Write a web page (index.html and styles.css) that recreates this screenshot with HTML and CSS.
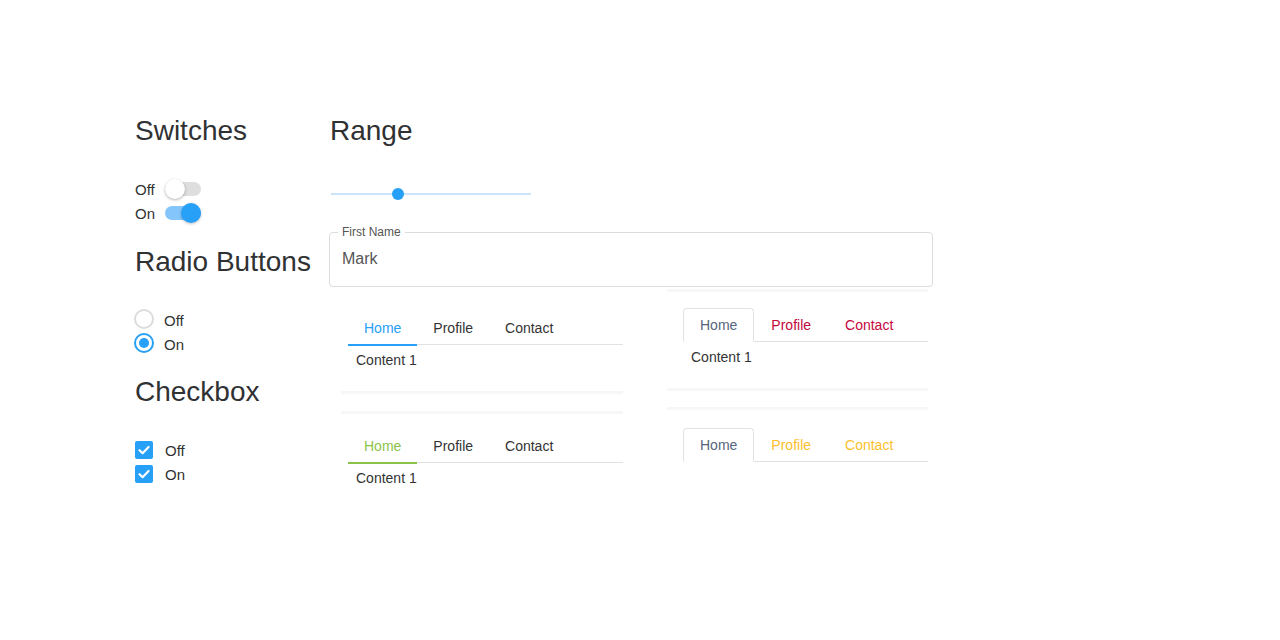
FILE: index.html
```html
<!DOCTYPE html>
<html lang="en">
<head>
<meta charset="utf-8">
<title>Form controls</title>
<link rel="stylesheet" href="styles.css">
</head>
<body>
<div class="page">
  <div class="col-left">
    <section class="section">
      <h2 class="title">Switches</h2>
      <div class="row">
        <span class="label">Off</span>
        <span class="switch"><span class="switch-knob"></span></span>
      </div>
      <div class="row">
        <span class="label">On</span>
        <span class="switch switch--on"><span class="switch-knob"></span></span>
      </div>
    </section>
    <section class="section">
      <h2 class="title">Radio Buttons</h2>
      <div class="row">
        <span class="radio"></span>
        <span class="label">Off</span>
      </div>
      <div class="row">
        <span class="radio radio--on"><span class="radio-dot"></span></span>
        <span class="label">On</span>
      </div>
    </section>
    <section class="section">
      <h2 class="title">Checkbox</h2>
      <div class="row">
        <span class="check"><svg viewBox="0 0 18 18" width="18" height="18"><polyline points="4.5,9.2 7.6,12.2 13.6,6" fill="none" stroke="#fff" stroke-width="2.2" stroke-linecap="round" stroke-linejoin="round"/></svg></span>
        <span class="label">Off</span>
      </div>
      <div class="row">
        <span class="check"><svg viewBox="0 0 18 18" width="18" height="18"><polyline points="4.5,9.2 7.6,12.2 13.6,6" fill="none" stroke="#fff" stroke-width="2.2" stroke-linecap="round" stroke-linejoin="round"/></svg></span>
        <span class="label">On</span>
      </div>
    </section>
  </div>

  <div class="col-right">
    <h2 class="title title--inset">Range</h2>
    <div class="slider">
      <div class="slider-track"></div>
      <div class="slider-thumb"></div>
    </div>

    <fieldset class="field">
      <legend class="field-legend">First Name</legend>
      <div class="field-value">Mark</div>
    </fieldset>

    <div class="tab-grid">
      <div class="tab-col tab-col--wide">
        <div class="card card--pad-s bar-bottom">
          <div class="nav">
            <span class="tab tab--line tab--blue is-active">Home</span>
            <span class="tab tab--line">Profile</span>
            <span class="tab tab--line">Contact</span>
          </div>
          <div class="pane">Content 1</div>
        </div>
        <div class="card card--pad-s bar-top">
          <div class="nav">
            <span class="tab tab--line tab--green is-active">Home</span>
            <span class="tab tab--line">Profile</span>
            <span class="tab tab--line">Contact</span>
          </div>
          <div class="pane">Content 1</div>
        </div>
      </div>
      <div class="tab-col tab-col--narrow">
        <div class="card card--pad-l bar-top bar-bottom">
          <div class="nav">
            <span class="tab tab--box is-active">Home</span>
            <span class="tab tab--box tab--crimson">Profile</span>
            <span class="tab tab--box tab--crimson">Contact</span>
          </div>
          <div class="pane">Content 1</div>
        </div>
        <div class="card card--pad-l card--low bar-top">
          <div class="nav">
            <span class="tab tab--box is-active">Home</span>
            <span class="tab tab--box tab--amber">Profile</span>
            <span class="tab tab--box tab--amber">Contact</span>
          </div>
        </div>
      </div>
    </div>
  </div>
</div>
</body>
</html>
```

FILE: styles.css
```css
* { box-sizing: border-box; }

body {
  margin: 0;
  background: #fff;
  color: #333;
  font-family: "Liberation Sans", Arial, sans-serif;
}

.page {
  display: flex;
  padding: 115px 0 0 135px;
}

.col-left { width: 194px; }
.col-right { width: 604px; }

.title {
  margin: 0 0 29.5px;
  font-size: 28px;
  line-height: 32px;
  font-weight: 400;
  color: #303133;
}
.title--inset { padding-left: 1px; }

.section + .section { margin-top: 21px; }

.row {
  display: flex;
  align-items: center;
  height: 24px;
}

.label {
  font-size: 15px;
  line-height: 24px;
  color: #333;
  padding-top: 3px;
}

/* switch */
.switch {
  position: relative;
  display: flex;
  align-items: center;
  width: 36px;
  height: 14px;
  margin-left: 10px;
  border-radius: 7px;
  background: #dedede;
}
.switch-knob {
  width: 20px;
  height: 20px;
  border-radius: 50%;
  background: #fff;
  box-shadow: 0 1px 3px rgba(0,0,0,0.3);
}
.switch--on { background: #84c6fb; justify-content: flex-end; }
.switch--on .switch-knob { background: #27a0f7; box-shadow: 0 1px 3px rgba(0,0,0,0.25); }

/* radio */
.radio {
  display: flex;
  align-items: center;
  justify-content: center;
  width: 20px;
  height: 20px;
  margin: 0 10px 0 -1px;
  border: 2px solid #dcdcdc;
  border-radius: 50%;
}
.radio--on { border-color: #27a0f7; }
.radio-dot {
  width: 10px;
  height: 10px;
  border-radius: 50%;
  background: #27a0f7;
}

/* checkbox */
.check {
  display: flex;
  width: 18px;
  height: 18px;
  margin-right: 12px;
  border-radius: 2px;
  background: #27a0f7;
}

/* slider */
.slider {
  position: relative;
  display: flex;
  align-items: center;
  height: 24px;
  margin-top: 35px;
  padding-left: 2px;
}
.slider-track {
  width: 200px;
  height: 2px;
  background: #c9e4fb;
}
.slider-thumb {
  position: absolute;
  left: 63px;
  top: 5.5px;
  width: 12px;
  height: 12px;
  border-radius: 50%;
  background: #27a0f7;
}

/* outlined field */
.field {
  margin: 19px 0 0;
  min-width: 0;
  padding: 10px 12px 17px;
  border: 1px solid #dcdcdc;
  border-radius: 4px;
}
.field-legend {
  margin-left: -4px;
  padding: 0 4px;
  font-size: 12px;
  line-height: 14px;
  color: #555;
}
.field-value {
  font-size: 16px;
  line-height: 20px;
  color: #555;
}

/* tabs */
.tab-grid {
  display: flex;
  gap: 44px;
  margin-top: 2px;
  padding-left: 12px;
}
.tab-col {
  display: flex;
  flex-direction: column;
  gap: 16px;
}
.tab-col--wide { width: 282px; padding-top: 4px; gap: 17px; }
.tab-col--narrow { width: 261px; }

.card {
  border-top: 3px solid transparent;
  border-bottom: 3px solid transparent;
  padding-top: 16px;
  padding-bottom: 21px;
}
.card--pad-s { padding-left: 7px; }
.card--pad-l { padding-left: 16px; }
.card--low { padding-top: 18px; }
.bar-top { border-top-color: #f6f7f9; }
.bar-bottom { border-bottom-color: #f6f7f9; }

.nav {
  display: flex;
  border-bottom: 1px solid #e2e2e2;
}
.tab {
  font-size: 14px;
  line-height: 16px;
  color: #333;
  white-space: nowrap;
}
.tab--line {
  padding: 8px 16px;
  border-bottom: 2px solid transparent;
  margin-bottom: -2px;
}
.tab--blue.is-active { color: #27a0f7; border-bottom-color: #27a0f7; }
.tab--green.is-active { color: #8bc34a; border-bottom-color: #8bc34a; }

.tab--box {
  padding: 8px 16px;
  border: 1px solid transparent;
  border-radius: 4px 4px 0 0;
  margin-bottom: -1px;
}
.tab--box.is-active {
  color: #56657a;
  border-color: #e2e2e2;
  border-bottom-color: #fff;
  background: #fff;
}
.tab--crimson { color: #c4073d; }
.tab--amber { color: #fbbf2c; }

.pane {
  padding: 5px 8px 0;
  font-size: 14px;
  line-height: 20px;
  color: #333;
}
```
